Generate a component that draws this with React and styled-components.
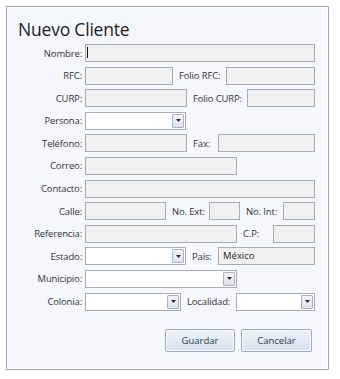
import React from 'react'
import styled, { createGlobalStyle } from 'styled-components'

const Global = createGlobalStyle`
  html, body {
    margin: 0;
    padding: 0;
    background: #ffffff;
  }
  body {
    font-family: 'Open Sans', 'Liberation Sans', sans-serif;
  }
`

const Window = styled.div`
  width: 340px;
  height: 379px;
  padding: 6px 0 0 6px;
  box-sizing: border-box;
`

const Panel = styled.div`
  width: 323px;
  height: 364px;
  box-sizing: border-box;
  border: 1px solid #a3a6ab;
  box-shadow: inset 0 0 0 1px #ffffff;
  background: #f4f8fc;
  padding: 10px 0 0 0;
  display: flex;
  flex-direction: column;
`

const Title = styled.h1`
  margin: 0 0 3px 11px;
  font-size: 17.5px;
  font-weight: 400;
  line-height: 24px;
  color: #1d1d1d;
  letter-spacing: -0.2px;
`

const Form = styled.div`
  display: flex;
  flex-direction: column;
  gap: 4.6px;
`

const Row = styled.div`
  display: flex;
  align-items: center;
  height: 18px;
`

const Label = styled.span`
  flex: none;
  box-sizing: border-box;
  width: ${p => p.$w}px;
  font-size: 9.5px;
  letter-spacing: -0.15px;
  color: #333333;
  white-space: nowrap;
  text-align: ${p => (p.$side ? 'left' : 'right')};
  padding: ${p => (p.$side ? '0 0 0 6px' : '0 3px 0 0')};
`

const Input = styled.div`
  flex: none;
  position: relative;
  box-sizing: border-box;
  width: ${p => p.$w}px;
  height: 18px;
  border: 1px solid #a9acb1;
  background: #f0f0f0;
  font-size: 9.5px;
  line-height: 16px;
  color: #1e1e1e;
  padding-left: 4px;
`

const Caret = styled.span`
  position: absolute;
  left: 1px;
  top: 2px;
  width: 1px;
  height: 11px;
  background: #111111;
`

const ComboBox = styled.div`
  flex: none;
  box-sizing: border-box;
  width: ${p => p.$w}px;
  height: 18px;
  border: 1px solid #a9acb1;
  background: #ffffff;
  display: flex;
  justify-content: flex-end;
  padding: 1px;
`

const DropButton = styled.div`
  box-sizing: border-box;
  width: 12px;
  height: 14px;
  border: 1px solid #a7b4c6;
  border-radius: 1px;
  background: linear-gradient(#f0f4fa, #d9e2ee);
  display: flex;
  align-items: center;
  justify-content: center;
`

const Buttons = styled.div`
  display: flex;
  justify-content: flex-end;
  gap: 6px;
  margin: 18px 16px 0 0;
`

const Button = styled.button`
  box-sizing: border-box;
  width: ${p => p.$w}px;
  height: 23px;
  border: 1px solid #9eabbd;
  border-radius: 2px;
  background: linear-gradient(#eef3fa, #d6e0ec);
  box-shadow: inset 0 0 0 1px #f7faff;
  font-family: 'Open Sans', 'Liberation Sans', sans-serif;
  font-size: 9.5px;
  color: #2b3a4c;
  padding: 0;
`

const Combo = ({ w }) => (
  <ComboBox $w={w}>
    <DropButton>
      <svg width="5" height="3" viewBox="0 0 5 3">
        <path d="M0 0h5L2.5 3z" fill="#2a2a2a" />
      </svg>
    </DropButton>
  </ComboBox>
)

export default function App() {
  return (
    <Window>
      <Global />
      <Panel>
        <Title>Nuevo Cliente</Title>
        <Form>
          <Row>
            <Label $w={78}>Nombre:</Label>
            <Input $w={230}><Caret /></Input>
          </Row>
          <Row>
            <Label $w={78}>RFC:</Label>
            <Input $w={88} />
            <Label $w={53} $side>Folio RFC:</Label>
            <Input $w={89} />
          </Row>
          <Row>
            <Label $w={78}>CURP:</Label>
            <Input $w={102} />
            <Label $w={60} $side>Folio CURP:</Label>
            <Input $w={68} />
          </Row>
          <Row>
            <Label $w={78}>Persona:</Label>
            <Combo w={101} />
          </Row>
          <Row>
            <Label $w={78}>Teléfono:</Label>
            <Input $w={102} />
            <Label $w={31} $side>Fax:</Label>
            <Input $w={97} />
          </Row>
          <Row>
            <Label $w={78}>Correo:</Label>
            <Input $w={152} />
          </Row>
          <Row>
            <Label $w={78}>Contacto:</Label>
            <Input $w={230} />
          </Row>
          <Row>
            <Label $w={78}>Calle:</Label>
            <Input $w={81} />
            <Label $w={43} $side>No. Ext:</Label>
            <Input $w={31} />
            <Label $w={43} $side>No. Int:</Label>
            <Input $w={32} />
          </Row>
          <Row>
            <Label $w={78}>Referencia:</Label>
            <Input $w={152} />
            <Label $w={36} $side>C.P:</Label>
            <Input $w={42} />
          </Row>
          <Row>
            <Label $w={78}>Estado:</Label>
            <Combo w={101} />
            <Label $w={32} $side>País:</Label>
            <Input $w={97}>México</Input>
          </Row>
          <Row>
            <Label $w={78}>Municipio:</Label>
            <Combo w={152} />
          </Row>
          <Row>
            <Label $w={78}>Colonia:</Label>
            <Combo w={96} />
            <Label $w={55} $side>Localidad:</Label>
            <Combo w={79} />
          </Row>
        </Form>
        <Buttons>
          <Button $w={70}>Guardar</Button>
          <Button $w={71}>Cancelar</Button>
        </Buttons>
      </Panel>
    </Window>
  )
}
